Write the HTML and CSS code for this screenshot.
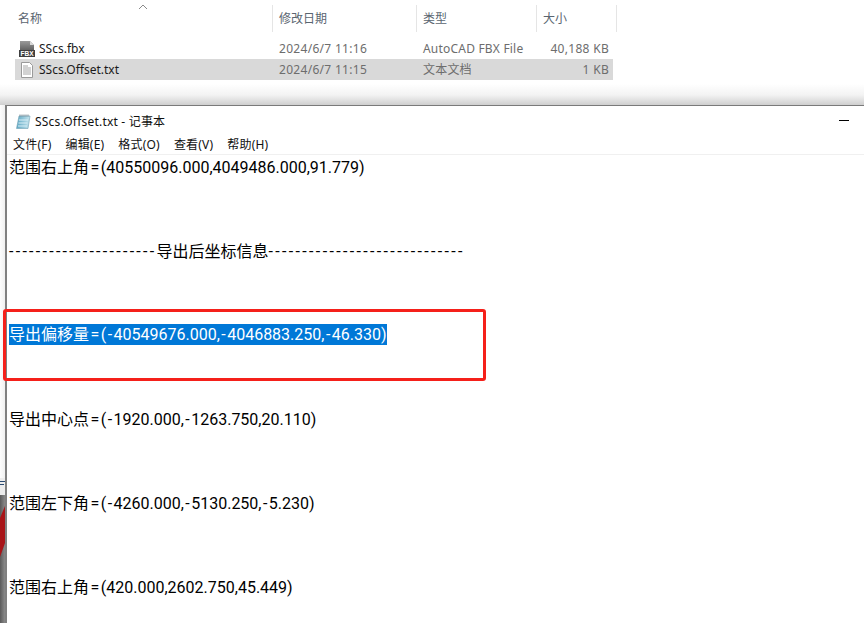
FILE: index.html
```html
<!DOCTYPE html>
<html lang="zh">
<head>
<meta charset="utf-8">
<title>SScs.Offset.txt - 记事本</title>
<link rel="stylesheet" href="styles.css">
</head>
<body>
<section class="explorer">
  <svg class="sort" width="10" height="6" viewBox="0 0 10 6"><path d="M1 5 5 1l4 4" fill="none" stroke="#8a8a8a"/></svg>
  <div class="header">
    <div class="col c1">名称</div>
    <div class="col c2">修改日期</div>
    <div class="col c3">类型</div>
    <div class="col c4">大小</div>
  </div>
  <div class="row">
    <svg class="ficon" width="16" height="16" viewBox="0 0 16 16"><defs><linearGradient id="f" x1="0" x2="0" y1="0" y2="1"><stop offset="0" stop-color="#9a9a9a"/><stop offset="1" stop-color="#5c5c5c"/></linearGradient></defs><path d="M1 0h10l4 4v6H1z" fill="url(#f)"/><path d="M11 0v4h4z" fill="#d8d8d8"/><rect x="0" y="9" width="16" height="7" fill="#3f3f3f"/><text x="8" y="15" class="fbx">FBX</text></svg>
    <span class="name">SScs.fbx</span><span class="date">2024/6/7 11:16</span><span class="type">AutoCAD FBX File</span><span class="size">40,188 KB</span>
  </div>
  <div class="row selected">
    <svg class="ficon" width="16" height="16" viewBox="0 0 16 16"><path d="M2.500.5h8l3 3v12h-11z" fill="#fff" stroke="#9a9a9a"/><path d="M4 4h5M4 6h8M4 8h8M4 10h8M4 12h8" stroke="#a5a5a5"/></svg>
    <span class="name">SScs.Offset.txt</span><span class="date">2024/6/7 11:15</span><span class="type">文本文档</span><span class="size">1 KB</span>
  </div>
</section>
<div class="desktop">
  <div class="strip"><svg class="wall" width="5" height="145" viewBox="0 0 5 145"><defs><linearGradient id="g" x1="0" x2="1"><stop offset="0" stop-color="#5a5a5a"/><stop offset="1" stop-color="#8a8a8a"/></linearGradient></defs><rect width="5" height="17" fill="#ececec"/><path d="M0 3.500h5M0 6.500h4" stroke="#2a4a70"/><rect y="17" width="5" height="128" fill="url(#g)"/><path d="M5 28v37L0 79V40z" fill="#a81418"/></svg></div>
  <section class="notepad">
    <div class="titlebar">
      <svg class="nicon" width="16" height="16" viewBox="0 0 16 16"><defs><linearGradient id="n" x1="0" x2="1"><stop offset="0" stop-color="#5fa8c4"/><stop offset="1" stop-color="#c4e4ee"/></linearGradient></defs><path d="M4 3h11l-2 12.500H1.500z" fill="url(#n)" stroke="#6f9fb4" stroke-width=".6"/><path d="M4.500 2.500h10" stroke="#7f8f98" stroke-width="2" stroke-dasharray="1 1"/><path d="M4 7h9M3.500 10h9M3 13h9" stroke="#d8eef6"/></svg>
      <span class="title">SScs.Offset.txt - 记事本</span>
      <span class="min"></span>
    </div>
    <nav class="menu"><span>文件(F)</span><span>编辑(E)</span><span>格式(O)</span><span>查看(V)</span><span>帮助(H)</span></nav>
    <div class="text">
      <p>范围右上角<span class="eq">=</span>(40550096.000,4049486.000,91.779)</p>
      <p><span class="dash">----------------------</span>导出后坐标信息<span class="dash-long">-----------------------------</span></p>
      <p class="mark"><span class="sel">导出偏移量<span class="eq">=</span>(<span class="minus">-</span>40549676.000,<span class="minus">-</span>4046883.250,<span class="minus">-</span>46.330)</span></p>
      <p>导出中心点<span class="eq">=</span>(<span class="minus">-</span>1920.000,<span class="minus">-</span>1263.750,20.110)</p>
      <p>范围左下角<span class="eq">=</span>(<span class="minus">-</span>4260.000,<span class="minus">-</span>5130.250,<span class="minus">-</span>5.230)</p>
      <p>范围右上角<span class="eq">=</span>(420.000,2602.750,45.449)</p>
    </div>
  </section>
</div>
</body>
</html>
```
FILE: styles.css
```css
* { box-sizing: border-box; }
html, body { margin: 0; height: 623px; overflow: hidden; background: #fff; }
body { font-family: "Noto Sans", "Noto Sans CJK SC", sans-serif; color: #000; }
.explorer { height: 105px; padding: 5px 0 0 15px; font-size: 12px; color: #6d6d6d; position: relative;
  background: linear-gradient(#fff 0, #fff 84px, #f3f3f3 95px, #cfcfcf 105px); }
.sort { position: absolute; left: 138px; top: 4px; }
.header { display: flex; height: 27px; }
.col { border-right: 1px solid #e5e5e5; padding: 5px 0 0 3px; line-height: 17px; color: #5a6570; }
.c1 { width: 258px; } .c2 { width: 144px; padding-left: 6px; } .c3 { width: 120px; padding-left: 6px; } .c4 { width: 80px; padding-left: 6px; }
.row { display: flex; align-items: center; height: 21px; width: 598px; line-height: 21px; }
.header + .row { margin-top: 6px; }
.selected { background: #d9d9d9; }
.ficon { margin: 0 4px 0 4px; flex: none; }
.fbx { font: bold 6.500px "Liberation Sans", sans-serif; fill: #fff; text-anchor: middle; }
.name { width: 240px; color: #1a1a1a; }
.date { width: 144px; letter-spacing: .3px; }
.type { width: 120px; letter-spacing: .2px; }
.size { width: 66px; text-align: right; letter-spacing: .3px; }
.desktop { display: flex; height: 518px; }
.strip { width: 5px; padding-top: 373px; flex: none; background: linear-gradient(to right, #fdfdfd, #f0f0f0); }
.wall { display: block; }
.notepad { flex: 1; border-top: 1px solid #7a7a7a; border-left: 2px solid #808080; background: #fff; }
.titlebar { height: 29px; display: flex; align-items: center; padding-left: 8px; position: relative; }
.nicon { margin-right: 4px; }
.title { font-size: 12px; letter-spacing: .2px; color: #111; }
.min { position: absolute; right: 15px; top: 14px; width: 10px; height: 1px; background: #000; }
.menu { display: flex; gap: 14px; height: 20px; padding-left: 6px; font-size: 12px; letter-spacing: .2px; line-height: 20px; border-bottom: 1px solid #f0f0f0; color: #111; }
.text { font-family: Roboto, "Noto Sans CJK SC", sans-serif; font-size: 16px; line-height: 28px; padding-left: 2px; margin-top: -1px; }
.text p { margin: 0 0 56px; white-space: pre; }
.eq { margin: 0 1.500px; }
.minus { margin: 0 1.450px; }
.dash { letter-spacing: 2.280px; }
.dash-long { letter-spacing: 2.350px; }
.mark { position: relative; }
.mark::after { content: ""; box-sizing: border-box; position: absolute; left: -6px; top: -13px; width: 483px; height: 72px; border: 3px solid #f5201a; border-radius: 3px; }
.sel { background: #0078d7; color: #fff; display: inline-block; height: 21px; line-height: 21px; vertical-align: top; margin-top: 2px; }
```
